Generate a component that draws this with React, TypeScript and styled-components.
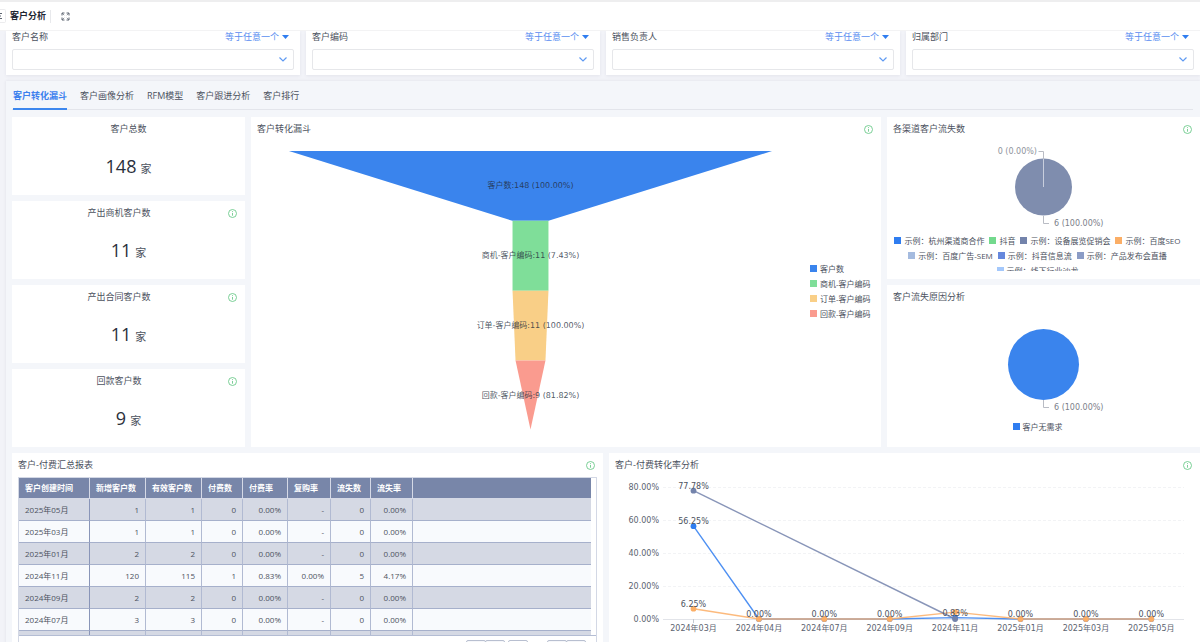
import React from 'react';
import styled, { createGlobalStyle } from 'styled-components';

const sans = `'Open Sans', 'Noto Sans CJK SC', sans-serif`;
const chartFont = `'DejaVu Sans', 'Noto Sans CJK SC', sans-serif`;

const GlobalStyle = createGlobalStyle`
  * { box-sizing: border-box; }
  body { margin: 0; background: #f2f3f8; font-family: ${sans}; color: #4c525e; font-size: 9px; line-height: 12px; }
  button, select { font-family: inherit; }
  svg { display: block; }
`;

const Page = styled.div`
  height: 100vh;
  display: flex;
  flex-direction: column;
`;

const TopBar = styled.header`
  flex: none;
  display: flex;
  align-items: center;
  height: 31px;
  background: #fff;
  border-top: 2px solid #eeeeef;
  border-bottom: 1px solid #f3f3f4;
`;

const IconButton = styled.button`
  display: flex;
  border: 0;
  padding: 0;
  background: none;
  color: #5d6470;
`;

const CollapseButton = styled(IconButton)`
  width: 6px;
  height: 14px;
  align-items: center;
  border: 1px solid #ececee;
  border-left: 0;
  border-radius: 0 2px 2px 0;
`;

const PageTitle = styled.h1`
  margin: 0 4px;
  font-size: 9px;
  font-weight: 700;
  color: #1f2633;
`;

const Divider = styled.span`
  width: 1px;
  height: 13px;
  margin-right: 10px;
  background: #e8e9ec;
`;

const Scroller = styled.main`
  flex: 1;
  min-height: 0;
  overflow: auto;
  scrollbar-width: none;
  padding-left: 6px;
`;

const Filters = styled.form`
  display: grid;
  grid-template-columns: repeat(4, 1fr);
  gap: 6px;
  margin-bottom: 6px;
`;

const FilterCard = styled.div`
  padding: 0 6px 5px;
  background: #fff;
  box-shadow: 0 1px 3px rgba(60, 60, 90, 0.08);
`;

const FilterHead = styled.div`
  display: flex;
  justify-content: space-between;
  align-items: center;
  height: 12px;
  margin-bottom: 6px;
`;

const Operator = styled.button`
  display: flex;
  align-items: center;
  gap: 3px;
  border: 0;
  padding: 0 5px 0 0;
  background: none;
  font-size: 9px;
  line-height: 12px;
  color: #5a8df0;
`;

const SelectWrap = styled.div`
  display: grid;
  align-items: center;
  > * { grid-area: 1 / 1; }
  > svg { justify-self: end; margin-right: 7px; pointer-events: none; }
`;

const Select = styled.select`
  appearance: none;
  width: 100%;
  height: 21px;
  border: 1px solid #e6e7ea;
  border-radius: 2px;
  background: #fff;
  font-size: 9px;
`;

const Board = styled.section`
  padding-left: 6px;
  background: #f4f6fa;
  box-shadow: 0 0 3px rgba(60, 60, 90, 0.1);
`;

const Tabs = styled.nav`
  display: flex;
  gap: 13px;
  height: 29px;
  margin: 0 7px 7px 0;
  padding-left: 1px;
  border-bottom: 1px solid #e3e5eb;
`;

const Tab = styled.a<{ $active?: boolean }>`
  height: 29px;
  padding-top: 9px;
  border-bottom: 2px solid ${p => (p.$active ? '#3d87ee' : 'transparent')};
  color: ${p => (p.$active ? '#3d80ee' : '#4c525e')};
  font-weight: ${p => (p.$active ? 700 : 400)};
  text-decoration: none;
`;

const Overview = styled.div`
  display: grid;
  grid-template-columns: 233fr 630fr 313fr;
  gap: 6px;
  margin-bottom: 6px;
`;

const Details = styled.div`
  display: grid;
  grid-template-columns: 1fr 1fr;
  gap: 6px;
`;

const Stack = styled.div`
  display: grid;
  grid-auto-rows: 1fr;
  gap: 6px;
`;

const Card = styled.article`
  display: flex;
  flex-direction: column;
  min-width: 0;
  background: #fff;
`;

const CardHead = styled.div`
  display: flex;
  align-items: center;
  height: 24px;
`;

const CardTitle = styled.h2<{ $center?: boolean }>`
  flex: 1;
  margin: 0;
  padding-left: ${p => (p.$center ? 0 : 6)}px;
  font-size: 9px;
  font-weight: 400;
  line-height: 12px;
  text-align: ${p => (p.$center ? 'center' : 'left')};
`;

const InfoButton = styled(IconButton)`
  margin: 0 8px 0 2px;
  color: #6cc98a;
`;

const StatValue = styled.p`
  display: flex;
  justify-content: center;
  align-items: baseline;
  gap: 4px;
  height: 54px;
  margin: 0;
  padding-top: 13px;
  font-size: 18px;
  line-height: 24px;
  color: #2a303b;
`;

const Unit = styled.span`
  font-size: 11px;
  color: #4c525e;
`;

const FunnelBody = styled.div`
  flex: 1;
  display: grid;
  grid-template-columns: 1fr 71px;
  align-items: center;
  padding-bottom: 6px;
`;

const Legend = styled.ul<{ $column?: boolean }>`
  display: flex;
  flex-flow: ${p => (p.$column ? 'column' : 'row wrap')};
  justify-content: center;
  gap: 0 5px;
  max-height: ${p => (p.$column ? 'none' : '38px')};
  overflow: hidden;
  margin: 0;
  padding: 0 ${p => (p.$column ? 0 : 12)}px 0 0;
  list-style: none;
  font-size: 8px;
  line-height: 15px;
`;

const LegendItem = styled.li<{ $color: string }>`
  display: flex;
  align-items: center;
  gap: 3px;
  white-space: nowrap;
  &::before {
    content: '';
    width: 7px;
    height: 7px;
    background: ${p => p.$color};
  }
`;

const Chart = styled.svg`
  width: 100%;
  height: auto;
  font-family: ${chartFont};
  font-size: 8px;
`;

const TableFrame = styled.div`
  margin: 0 6px;
  border: 1px solid #d3d8e5;
  border-bottom: 0;
`;

const TableViewport = styled.div`
  height: 158px;
  overflow: hidden;
  padding-right: 5px;
  border-bottom: 1px solid #b4bdd4;
`;

const Table = styled.table`
  width: 100%;
  table-layout: fixed;
  border-collapse: separate;
  border-spacing: 0;
  font-size: 8px;
  line-height: 12px;
  th, td {
    height: 22px;
    padding: 0 6px;
    border-right: 1px solid #b1bad2;
    border-bottom: 1px solid #a6b0cb;
    white-space: nowrap;
  }
  th:last-child, td:last-child { border-right: 0; }
  thead th {
    height: 21px;
    background: #7886a9;
    color: #fff;
    text-align: left;
    font-weight: 700;
    border-color: #d5d9e6;
  }
  tbody th { text-align: left; font-weight: 400; border-right-color: #8995b8; }
  td { text-align: right; }
  tbody tr { background: #f8fafd; }
  tbody tr:nth-child(odd) { background: #d5d9e4; }
`;

const Pager = styled.div`
  display: flex;
  justify-content: flex-end;
  gap: 3px;
  height: 26px;
  padding: 4px 10px 0 0;
`;

const PagerButton = styled.button`
  width: 20px;
  height: 16px;
  border: 1px solid #b8bfd0;
  border-radius: 2px;
  padding: 0;
  background: #f6f7fa;
  & + & { margin-left: -4px; }
`;

const PagerInput = styled.input`
  width: 20px;
  height: 16px;
  margin-right: 16px;
  border: 1px solid #b8bfd0;
  border-radius: 2px;
  padding: 0;
  font-size: 8px;
  text-align: center;
`;

const InfoIcon = () => (
  <svg width="9" height="9" viewBox="0 0 9 9" fill="none" stroke="currentColor">
    <circle cx="4.5" cy="4.5" r="4" strokeWidth=".9" />
    <path d="M4.5 4v2.7M4.5 2.2v.9" strokeWidth=".9" />
  </svg>
);

const Info = ({ label }: { label: string }) => (
  <InfoButton type="button" aria-label={label}><InfoIcon /></InfoButton>
);

const filters = ['客户名称', '客户编码', '销售负责人', '归属部门'];
const tabs = ['客户转化漏斗', '客户画像分析', 'RFM模型', '客户跟进分析', '客户排行'];

const stats = [
  { title: '客户总数', value: 148, info: false },
  { title: '产出商机客户数', value: 11, info: true },
  { title: '产出合同客户数', value: 11, info: true },
  { title: '回款客户数', value: 9, info: true },
];

const funnel = [
  { name: '客户数', text: '客户数:148 (100.00%)', color: '#3a84ed', points: '38,10 522,10 298,80 262,80' },
  { name: '商机-客户编码', text: '商机-客户编码:11 (7.43%)', color: '#7fde99', points: '262,80 298,80 298,150 262,150' },
  { name: '订单-客户编码', text: '订单-客户编码:11 (100.00%)', color: '#f9cf87', points: '262,150 298,150 295,220 265,220' },
  { name: '回款-客户编码', text: '回款-客户编码:9 (81.82%)', color: '#fa9b8f', points: '265,220 295,220 280,289' },
];

const channels = [
  ['示例：杭州渠道商合作', '#2f7df0'],
  ['抖音', '#73d98d'],
  ['示例：设备展览促销会', '#7383ab'],
  ['示例：百度SEO', '#fbae66'],
  ['示例：百度广告-SEM', '#a5bbdf'],
  ['示例：抖音信息流', '#6688dd'],
  ['示例：产品发布会直播', '#8b9cc6'],
  ['示例：线下行业沙龙', '#a4c8fb'],
];

const columns = [
  ['客户创建时间', 71], ['新增客户数', 56], ['有效客户数', 56], ['付费数', 41], ['付费率', 45],
  ['复购率', 43], ['流失数', 40], ['流失率', 42],
] as const;

const rows = [
  ['2025年05月', '1', '1', '0', '0.00%', '-', '0', '0.00%'],
  ['2025年03月', '1', '1', '0', '0.00%', '-', '0', '0.00%'],
  ['2025年01月', '2', '2', '0', '0.00%', '-', '0', '0.00%'],
  ['2024年11月', '120', '115', '1', '0.83%', '0.00%', '5', '4.17%'],
  ['2024年09月', '2', '2', '0', '0.00%', '-', '0', '0.00%'],
  ['2024年07月', '3', '3', '0', '0.00%', '-', '0', '0.00%'],
  ['', '', '', '', '', '', '', ''],
];

const months = ['2024年03月', '2024年04月', '2024年07月', '2024年09月', '2024年11月', '2025年01月', '2025年03月', '2025年05月'];
const monthX = (i: number) => 84.5 + i * 65.4;
const rateY = (v: number) => 142 - v * 1.65;

const series: { color: string; data: [number, number][] }[] = [
  { color: '#2f7df0', data: [[0, 56.25], [1, 0], [2, 0], [3, 0], [4, 0.83], [5, 0], [6, 0], [7, 0]] },
  { color: '#fbae66', data: [[0, 6.25], [1, 0], [2, 0], [3, 0], [4, 4.17], [5, 0], [6, 0], [7, 0]] },
  { color: '#7383ab', data: [[0, 77.78], [4, 0]] },
];

const rateLabels: [number, number][] = [[0, 77.78], [0, 56.25], [0, 6.25], [1, 0], [2, 0], [3, 0], [4, 0.83], [5, 0], [6, 0], [7, 0]];

const FunnelChart = () => (
  <Chart viewBox="0 0 560 300" role="img" aria-label="客户转化漏斗">
    {funnel.map(f => <polygon key={f.name} points={f.points} fill={f.color} />)}
    {funnel.map((f, i) => (
      <text key={f.name} x="280" y={47 + i * 70} textAnchor="middle" fill="#222b3a" fillOpacity=".8">{f.text}</text>
    ))}
  </Chart>
);

const ChannelPie = () => (
  <Chart viewBox="0 0 313 92" role="img" aria-label="各渠道客户流失数">
    <circle cx="156.5" cy="46" r="28.5" fill="#7f8dae" />
    <path d="M156.5 46V18" stroke="#c8cedd" fill="none" />
    <path d="M156.5 18V10.5H151.5M156.5 75V82.5H162" stroke="#b9bcc4" fill="none" />
    <text x="150" y="13" textAnchor="end" fill="#8f939c">0 (0.00%)</text>
    <text x="167" y="85" fill="#7c808a">6 (100.00%)</text>
  </Chart>
);

const ReasonPie = () => (
  <Chart viewBox="0 0 313 110" role="img" aria-label="客户流失原因分析">
    <circle cx="156.5" cy="55.5" r="35.5" fill="#3a84ed" />
    <path d="M156.5 91V98.5H162" stroke="#b9bcc4" fill="none" />
    <text x="167" y="101" fill="#7c808a">6 (100.00%)</text>
  </Chart>
);

const RateChart = () => (
  <Chart viewBox="0 0 591 165" role="img" aria-label="客户-付费转化率分析">
    {[80, 60, 40, 20, 0].map(v => (
      <g key={v}>
        <path d={`M54 ${Math.round(rateY(v)) + 0.5}H575`} stroke={v ? '#f2f3f5' : '#e2e4e9'} strokeDasharray={v ? '3 2' : undefined} />
        <text x="50" y={rateY(v) + 3} textAnchor="end" fill="#5c6370">{v.toFixed(2)}%</text>
      </g>
    ))}
    <path d="M84.5 142v4" stroke="#c5c8d0" />
    {months.map((m, i) => (
      <text key={m} x={monthX(i)} y="154" textAnchor="middle" fill="#5c6370">{m}</text>
    ))}
    {series.map(s => (
      <g key={s.color}>
        <polyline points={s.data.map(([i, v]) => `${monthX(i)},${rateY(v)}`).join(' ')} fill="none" stroke={s.color} strokeWidth="1.4" strokeOpacity=".85" />
        {s.data.map(([i, v]) => <circle key={i} cx={monthX(i)} cy={rateY(v)} r="2.9" fill={s.color} />)}
      </g>
    ))}
    {rateLabels.map(([i, v]) => (
      <text key={`${i}-${v}`} x={monthX(i)} y={rateY(v) - 2} textAnchor="middle" fill="#4c525e">{v.toFixed(2)}%</text>
    ))}
  </Chart>
);

export default function App() {
  return (
    <Page>
      <GlobalStyle />
      <TopBar>
        <CollapseButton type="button" aria-label="展开菜单">
          <svg width="3" height="8" viewBox="0 0 3 8" fill="none" stroke="currentColor"><path d="M0 1.5h2M0 6.5h2M0 4h1" /></svg>
        </CollapseButton>
        <PageTitle>客户分析</PageTitle>
        <Divider />
        <IconButton type="button" aria-label="全屏">
          <svg width="9" height="9" viewBox="0 0 9 9" fill="none" stroke="currentColor">
            <path d="M1 3.500V1H3.500M5.500 1H8V3.500M8 5.500V8H5.500M3.500 8H1V5.500" strokeWidth="1" />
            <path d="M1 1l2.200 2.200M8 1L5.800 3.200M8 8L5.800 5.800M1 8l2.200-2.200" strokeWidth=".7" />
          </svg>
        </IconButton>
      </TopBar>
      <Scroller>
        <Filters>
          {filters.map((name, i) => (
            <FilterCard key={name}>
              <FilterHead>
                <label htmlFor={`filter-${i}`}>{name}</label>
                <Operator type="button">
                  等于任意一个
                  <svg width="7" height="4" viewBox="0 0 7 4"><path d="M0 0h7L3.500 4z" fill="#2f7df0" /></svg>
                </Operator>
              </FilterHead>
              <SelectWrap>
                <Select id={`filter-${i}`}><option value="" /></Select>
                <svg width="8" height="5" viewBox="0 0 8 5" fill="none" stroke="#5f9af2" strokeWidth="1.2"><path d="M.5 .5L4 4L7.500 .5" /></svg>
              </SelectWrap>
            </FilterCard>
          ))}
        </Filters>
        <Board>
          <Tabs>
            {tabs.map((t, i) => <Tab key={t} href="#" $active={i === 0}>{t}</Tab>)}
          </Tabs>
          <Overview>
            <Stack>
              {stats.map(s => (
                <Card key={s.title}>
                  <CardHead>
                    <CardTitle $center>{s.title}</CardTitle>
                    {s.info && <Info label={`${s.title}说明`} />}
                  </CardHead>
                  <StatValue>{s.value}<Unit>家</Unit></StatValue>
                </Card>
              ))}
            </Stack>
            <Card>
              <CardHead><CardTitle>客户转化漏斗</CardTitle><Info label="客户转化漏斗说明" /></CardHead>
              <FunnelBody>
                <FunnelChart />
                <Legend $column>
                  {funnel.map(f => <LegendItem key={f.name} $color={f.color}>{f.name}</LegendItem>)}
                </Legend>
              </FunnelBody>
            </Card>
            <Stack>
              <Card>
                <CardHead><CardTitle>各渠道客户流失数</CardTitle><Info label="各渠道客户流失数说明" /></CardHead>
                <ChannelPie />
                <Legend>
                  {channels.map(([name, color]) => <LegendItem key={name} $color={color}>{name}</LegendItem>)}
                </Legend>
              </Card>
              <Card>
                <CardHead><CardTitle>客户流失原因分析</CardTitle></CardHead>
                <ReasonPie />
                <Legend><LegendItem $color="#2f7df0">客户无需求</LegendItem></Legend>
              </Card>
            </Stack>
          </Overview>
          <Details>
            <Card>
              <CardHead><CardTitle>客户-付费汇总报表</CardTitle><Info label="客户-付费汇总报表说明" /></CardHead>
              <TableFrame>
                <TableViewport>
                  <Table>
                    <colgroup>
                      {columns.map(([name, width]) => <col key={name} width={width} />)}
                      <col />
                    </colgroup>
                    <thead>
                      <tr>{columns.map(([name]) => <th key={name} scope="col">{name}</th>)}<th aria-hidden="true" /></tr>
                    </thead>
                    <tbody>
                      {rows.map((r, n) => (
                        <tr key={n}>
                          <th scope="row">{r[0]}</th>
                          {r.slice(1).map((c, i) => <td key={i}>{c}</td>)}
                          <td />
                        </tr>
                      ))}
                    </tbody>
                  </Table>
                </TableViewport>
                <Pager>
                  <PagerButton type="button" aria-label="首页" />
                  <PagerButton type="button" aria-label="上一页" />
                  <PagerInput aria-label="页码" />
                  <PagerButton type="button" aria-label="下一页" />
                  <PagerButton type="button" aria-label="末页" />
                </Pager>
              </TableFrame>
            </Card>
            <Card>
              <CardHead><CardTitle>客户-付费转化率分析</CardTitle><Info label="客户-付费转化率分析说明" /></CardHead>
              <RateChart />
            </Card>
          </Details>
        </Board>
      </Scroller>
    </Page>
  );
}
